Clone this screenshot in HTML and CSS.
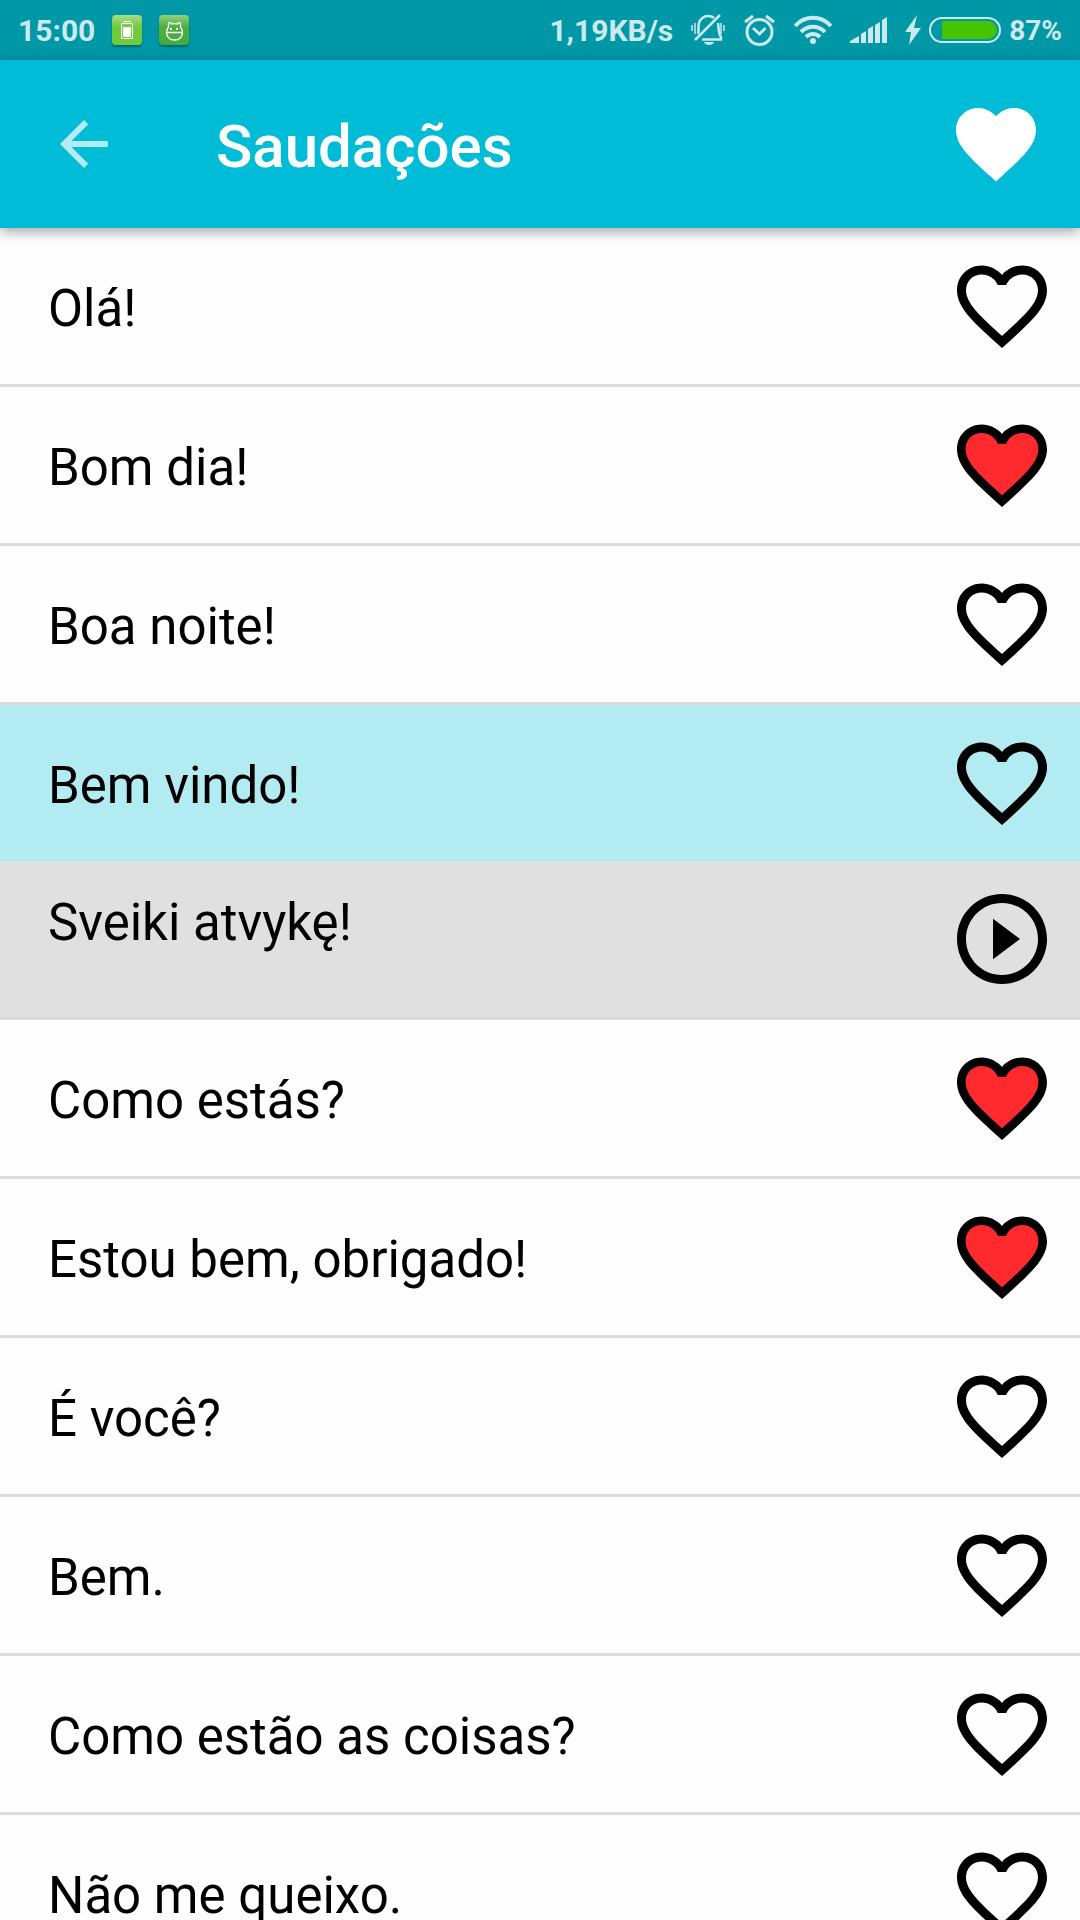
FILE: index.html
```html
<!DOCTYPE html>
<html lang="pt">

<head>
	<meta charset="UTF-8">
	<meta name="viewport" content="width=device-width, initial-scale=1.0">
	<title>Saudações</title>
	<link rel="stylesheet" href="styles.css">
</head>

<body>

	<!-- shared icons -->
	<svg class="icon-defs" aria-hidden="true">
		<symbol id="icon-heart" viewBox="0 0 24 24">
			<path d="M12 21.35l-1.45-1.32C5.4 15.36 2 12.28 2 8.5 2 5.42 4.42 3 7.5 3c1.74 0 3.41.81 4.5 2.09C13.09 3.81 14.76 3 16.5 3 19.58 3 22 5.42 22 8.5c0 3.78-3.4 6.86-8.55 11.54L12 21.35z" />
		</symbol>
		<symbol id="icon-heart-border" viewBox="0 0 24 24">
			<path d="M16.5 3c-1.74 0-3.41.81-4.5 2.09C10.91 3.81 9.24 3 7.5 3 4.42 3 2 5.42 2 8.5c0 3.78 3.4 6.86 8.55 11.54L12 21.35l1.45-1.32C18.6 15.36 22 12.28 22 8.5 22 5.42 19.58 3 16.5 3zm-4.4 15.55l-.1.1-.1-.1C7.14 14.24 4 11.39 4 8.5 4 6.5 5.5 5 7.5 5c1.54 0 3.04.99 3.57 2.36h1.87C13.46 5.99 14.96 5 16.5 5c2 0 3.5 1.5 3.5 3.5 0 2.89-3.14 5.74-7.9 10.05z" />
		</symbol>
		<symbol id="icon-heart-red" viewBox="0 0 24 24">
			<path d="M12 21.35l-1.45-1.32C5.4 15.36 2 12.28 2 8.5 2 5.42 4.42 3 7.5 3c1.74 0 3.41.81 4.5 2.09C13.09 3.81 14.76 3 16.5 3 19.58 3 22 5.42 22 8.5c0 3.78-3.4 6.86-8.55 11.54L12 21.35z" />
			<path fill="#ff2a2d" d="M12.1 18.65l-.1.1-.1-.1C7.1 14.3 3.9 11.39 3.9 8.5 3.9 6.4 5.4 4.9 7.5 4.9c1.54 0 3.04 1 3.57 2.36h1.87C13.46 5.9 14.96 4.9 16.5 4.9c2.1 0 3.6 1.5 3.6 3.6 0 2.89-3.2 5.8-8 10.15z" />
		</symbol>
		<symbol id="icon-play" viewBox="0 0 24 24">
			<path d="M10 16.5l6-4.5-6-4.5v9zM12 2C6.48 2 2 6.48 2 12s4.48 10 10 10 10-4.48 10-10S17.52 2 12 2zm0 18c-4.41 0-8-3.59-8-8s3.59-8 8-8 8 3.59 8 8-3.59 8-8 8z" />
		</symbol>
		<symbol id="icon-back" viewBox="0 0 24 24">
			<path d="M20 11H7.83l5.59-5.59L12 4l-8 8 8 8 1.41-1.41L7.83 13H20v-2z" />
		</symbol>
	</svg>

	<div class="app">
		<div class="status-bar">
			<div class="status-left">
				<span>15:00</span>
				<svg class="app-badge app-badge-battery" width="30" height="30" viewBox="0 0 30 30">
					<path fill="none" stroke="#fff" d="M11 6.500h8M9.500 8.500h11v15h-11z" />
					<path fill="#fff" d="M11 12h8v10h-8z" />
				</svg>
				<svg class="app-badge app-badge-bot" width="30" height="30" viewBox="0 0 30 30">
					<path fill="none" stroke="#fff" stroke-width="1.300" d="M7.500 17.500h16M9.500 12V8.500c0-1.300 3-1.300 3 .5 2-.6 4-.6 6 0 0-1.800 3-1.800 3-.5V12c1.400 1.700 2 3.300 2 5.500 0 4.500-3.400 7.500-8 7.500s-8-3-8-7.500c0-2.200.7-3.800 2-5.500" />
					<path fill="#fff" d="M11 13h2v2h-2zM17 13h2v2h-2z" />
				</svg>
			</div>
			<div class="status-right">
				<span>1,19KB/s</span>
				<svg width="34" height="32" viewBox="0 0 34 32" fill="none" stroke="currentColor" stroke-width="2">
					<path d="M1 11v6M4 9v11M30 9v11M33 11v6" stroke-width="1.500" />
					<path d="M7 20c1-3 0-7 1-11 1-4 5-7 9-7 3 0 5 1 6 2M27 9c1 5 0 11 3 14v2.500H11" stroke-width="2.500" />
					<path d="M29 1L4 26" stroke-width="2.500" />
					<path d="M13 28h10c-1 4-9 4-10 0z" fill="currentColor" stroke="none" />
				</svg>
				<svg width="33" height="32" viewBox="0 0 33 32" fill="none" stroke="currentColor" stroke-width="3">
					<circle cx="16.500" cy="18" r="12.500" />
					<path d="M10 14l6.500 6 6-6M2 8l8-6M31 8l-8-6" />
				</svg>
				<svg width="38" height="30" viewBox="0 0 38 30" fill="none" stroke="currentColor" stroke-width="4">
					<path d="M1 11c10-11 26-11 36 0M7 17c7-7 17-7 24 0M12 22c4-4 10-4 14 0" />
					<circle cx="19" cy="26" r="3" fill="currentColor" stroke="none" />
				</svg>
				<svg width="37" height="26" viewBox="0 0 37 26" fill="currentColor">
					<path d="M0 26v-2l9-5v7zM11 17l5-3v12h-5zM18 12l5-3v17h-5zM25 8l5-3v21h-5zM32 3l5-3v26h-5z" />
				</svg>
				<div class="battery">
					<svg width="16" height="30" viewBox="0 0 16 30" fill="currentColor">
						<path d="M12 0L0 17h6L4 30l12-17H9z" />
					</svg>
					<svg width="72" height="26" viewBox="0 0 72 26">
						<rect x="1" y="1" width="70" height="24" rx="12" fill="none" stroke="currentColor" stroke-width="2" />
						<path fill="#46c400" d="M13 4h46a9 9 0 0 1 0 18H13z" />
					</svg>
					<span>87%</span>
				</div>
			</div>
		</div>

		<header class="toolbar">
			<button class="icon-btn toolbar-back" aria-label="Voltar"><svg><use href="#icon-back" /></svg></button>
			<h1 class="toolbar-title">Saudações</h1>
			<button class="icon-btn toolbar-favorites" aria-label="Favoritos"><svg><use href="#icon-heart" /></svg></button>
		</header>

		<ul class="phrase-list">
			<li class="phrase">
				<span class="phrase-text">Olá!</span>
				<button class="icon-btn" aria-label="Favorito"><svg><use href="#icon-heart-border" /></svg></button>
			</li>
			<li class="phrase">
				<span class="phrase-text">Bom dia!</span>
				<button class="icon-btn" aria-label="Favorito"><svg><use href="#icon-heart-red" /></svg></button>
			</li>
			<li class="phrase">
				<span class="phrase-text">Boa noite!</span>
				<button class="icon-btn" aria-label="Favorito"><svg><use href="#icon-heart-border" /></svg></button>
			</li>
			<li class="phrase phrase-active">
				<span class="phrase-text">Bem vindo!</span>
				<button class="icon-btn" aria-label="Favorito"><svg><use href="#icon-heart-border" /></svg></button>
			</li>
			<li class="phrase phrase-translation">
				<span class="phrase-text" lang="lt">Sveiki atvykę!</span>
				<button class="icon-btn" aria-label="Ouvir"><svg><use href="#icon-play" /></svg></button>
			</li>
			<li class="phrase">
				<span class="phrase-text">Como estás?</span>
				<button class="icon-btn" aria-label="Favorito"><svg><use href="#icon-heart-red" /></svg></button>
			</li>
			<li class="phrase">
				<span class="phrase-text">Estou bem, obrigado!</span>
				<button class="icon-btn" aria-label="Favorito"><svg><use href="#icon-heart-red" /></svg></button>
			</li>
			<li class="phrase">
				<span class="phrase-text">É você?</span>
				<button class="icon-btn" aria-label="Favorito"><svg><use href="#icon-heart-border" /></svg></button>
			</li>
			<li class="phrase">
				<span class="phrase-text">Bem.</span>
				<button class="icon-btn" aria-label="Favorito"><svg><use href="#icon-heart-border" /></svg></button>
			</li>
			<li class="phrase">
				<span class="phrase-text">Como estão as coisas?</span>
				<button class="icon-btn" aria-label="Favorito"><svg><use href="#icon-heart-border" /></svg></button>
			</li>
			<li class="phrase">
				<span class="phrase-text">Não me queixo.</span>
				<button class="icon-btn" aria-label="Favorito"><svg><use href="#icon-heart-border" /></svg></button>
			</li>
		</ul>
	</div>

</body>

</html>
```
FILE: styles.css
```css
* {
	margin: 0;
	padding: 0;
	box-sizing: border-box;
	font-family: Roboto, 'Noto Sans', Arial, sans-serif;
}

body {
	background: #fefefe;
	color: #000;
}

svg {
	display: block;
	flex: none;
}

.icon-defs {
	display: none;
}

.app {
	display: flex;
	flex-direction: column;
	height: 100vh;
}

/* status bar */
.status-bar {
	display: flex;
	flex: none;
	justify-content: space-between;
	align-items: center;
	height: 60px;
	padding: 0 18px;
	background: #0097a7;
	color: #cceaed;
	font-size: 30px;
	font-weight: 700;
	white-space: nowrap;
}

.status-left,
.status-right,
.battery {
	display: flex;
	align-items: center;
}

.status-left {
	gap: 17px;
}

.status-right {
	gap: 18px;
}

.battery {
	gap: 8px;
	font-size: 28px;
}

.app-badge {
	border-radius: 4px;
	box-shadow: 0 2px 2px rgba(0, 0, 0, .3);
}

.app-badge-battery {
	background: linear-gradient(#a8dc8a, #70cb3c 40%, #70cb3c);
}

.app-badge-bot {
	background: linear-gradient(#93cf86, #4caf3c 40%, #43ab3e);
}

/* toolbar */
.toolbar {
	display: flex;
	flex: none;
	align-items: center;
	position: relative;
	height: 168px;
	padding: 0 36px 0 48px;
	background: #00bcd7;
	box-shadow: 0 4px 12px rgba(0, 0, 0, .35);
}

.toolbar-title {
	flex: 1;
	padding: 4px 0 0 96px;
	color: #fff;
	font-size: 60px;
	font-weight: 500;
}

.icon-btn {
	flex: none;
	width: 108px;
	height: 108px;
	border: 0;
	background: none;
	cursor: pointer;
}

.icon-btn svg {
	width: 100%;
	height: 100%;
	fill: #000;
}

.toolbar-back {
	width: 72px;
	height: 72px;
}

.toolbar-back svg {
	fill: #b2ebf2;
}

.toolbar-favorites {
	width: 96px;
	height: 96px;
}

.toolbar-favorites svg {
	fill: #fff;
}

/* phrases */
.phrase-list {
	flex: 1;
	min-height: 0;
	overflow-y: auto;
	scrollbar-width: none;
	list-style: none;
}

.phrase {
	display: flex;
	align-items: center;
	padding: 24px 24px 24px 48px;
	border-bottom: 3px solid #dcdcdc;
	font-size: 51px;
	line-height: 60px;
}

.phrase-text {
	flex: 1;
	padding-top: 6px;
}

.phrase-active {
	border-bottom: 0;
	background: #b2ebf2;
}

.phrase-translation {
	align-items: flex-start;
	background: #e0e0e0;
}

.phrase-translation .phrase-text {
	padding-top: 8px;
}
```
